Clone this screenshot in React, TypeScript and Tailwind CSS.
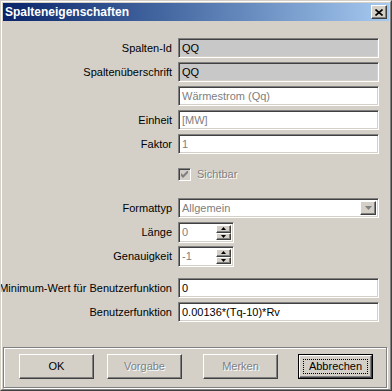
import React from 'react';

const sunken =
  'border border-t-[#808080] border-l-[#808080] border-b-white border-r-white shadow-[inset_1px_1px_0_#404040,inset_-1px_-1px_0_#d4d0c8]';
const raised =
  'border border-t-white border-l-white border-b-[#404040] border-r-[#404040] shadow-[inset_-1px_-1px_0_#808080,inset_1px_1px_0_#d4d0c8]';
const disabledText = 'text-[#808080] [text-shadow:1px_1px_0_#ffffff]';

const Row: React.FC<{ label?: string; className?: string; children: React.ReactNode }> = ({ label, className = '', children }) => (
  <div className={`flex items-center ${className}`}>
    <div className="w-[175px] shrink-0 flex justify-end pr-[6px] whitespace-nowrap">
      {label && <span>{label}</span>}
    </div>
    {children}
  </div>
);

const Field: React.FC<{ value: string; tone?: 'gray' | 'white'; dim?: boolean }> = ({ value, tone = 'white', dim }) => (
  <div
    className={`w-[201px] h-[20px] flex items-center pl-[3px] whitespace-nowrap ${sunken} ${
      tone === 'gray' ? 'bg-[#c8c8c8]' : 'bg-white'
    } ${dim ? 'text-[#808080]' : 'text-black'}`}
  >
    {value}
  </div>
);

const Spinner: React.FC<{ value: string }> = ({ value }) => (
  <div className={`w-[56px] h-[21px] flex bg-white ${sunken} p-[2px]`}>
    <div className="flex-1 flex items-center pl-[1px] text-[#808080]">{value}</div>
    <div className="w-[15px] flex flex-col">
      <div className={`flex-1 bg-[#d4d0c8] flex items-center justify-center ${raised}`}>
        <svg width="5" height="3" viewBox="0 0 5 3"><path d="M2.5 0L5 3H0z" fill="#000" /></svg>
      </div>
      <div className={`flex-1 bg-[#d4d0c8] flex items-center justify-center ${raised}`}>
        <svg width="5" height="3" viewBox="0 0 5 3"><path d="M0 0h5L2.5 3z" fill="#000" /></svg>
      </div>
    </div>
  </div>
);

const Btn: React.FC<{ label: string; className?: string; disabled?: boolean; isDefault?: boolean }> = ({ label, className = '', disabled, isDefault }) =>
  isDefault ? (
    <div className={`w-[75px] h-[25px] border border-black ${className}`}>
      <div className={`w-full h-full bg-[#d4d0c8] flex items-center justify-center ${raised} p-[3px]`}>
        <div className="w-full h-full border border-dotted border-black flex items-center justify-center">{label}</div>
      </div>
    </div>
  ) : (
    <div className={`w-[75px] h-[25px] bg-[#d4d0c8] flex items-center justify-center ${raised} ${disabled ? disabledText : 'text-black'} ${className}`}>
      {label}
    </div>
  );

export default function App() {
  return (
    <div
      className="w-[392px] h-[391px] overflow-hidden bg-[#d4d0c8] border border-t-[#d4d0c8] border-l-[#d4d0c8] border-r-[#404040] border-b-[#404040] text-[11px] text-black"
      style={{ fontFamily: '"Liberation Sans", Arial, sans-serif' }}
    >
      <div className="h-full flex flex-col border border-t-white border-l-white border-r-[#808080] border-b-[#808080] px-[1px] pt-[1px]">
        {/* title bar */}
        <div className="h-[18px] shrink-0 flex items-center justify-between bg-gradient-to-r from-[#0a246a] to-[#a6caf0] pl-[2px] pr-[2px]">
          <span className="text-white font-bold text-[12px] leading-none">Spalteneigenschaften</span>
          <div className={`w-[16px] h-[14px] bg-[#d4d0c8] flex items-center justify-center ${raised}`}>
            <svg width="8" height="7" viewBox="0 0 8 7">
              <path d="M0.5 0.5L7.5 6.5M7.5 0.5L0.5 6.5" stroke="#000" strokeWidth="1.6" />
            </svg>
          </div>
        </div>

        <div className="flex flex-col pt-[17px]">
          <Row label="Spalten-Id">
            <Field value="QQ" tone="gray" />
          </Row>
          <Row label="Spaltenüberschrift" className="mt-[4px]">
            <Field value="QQ" tone="gray" />
          </Row>
          <Row className="mt-[4px]">
            <Field value="Wärmestrom (Qq)" dim />
          </Row>
          <Row label="Einheit" className="mt-[4px]">
            <Field value="[MW]" dim />
          </Row>
          <Row label="Faktor" className="mt-[4px]">
            <Field value="1" dim />
          </Row>
          <Row className="mt-[14px] h-[13px]">
            <div className={`w-[13px] h-[13px] bg-[#d4d0c8] flex items-center justify-center ${sunken}`}>
              <svg width="7" height="7" viewBox="0 0 7 7">
                <path d="M0 2v3l2 2l5-5V-1L2 4z" fill="#808080" />
              </svg>
            </div>
            <span className={`ml-[6px] ${disabledText}`}>Sichtbar</span>
          </Row>
          <Row label="Formattyp" className="mt-[17px]">
            <div className={`w-[201px] h-[20px] flex bg-white ${sunken} p-[2px]`}>
              <div className="flex-1 flex items-center pl-[1px] text-[#808080]">Allgemein</div>
              <div className={`w-[16px] bg-[#d4d0c8] flex items-center justify-center ${raised}`}>
                <svg width="7" height="4" viewBox="0 0 7 4"><path d="M0 0h7L3.5 4z" fill="#808080" /></svg>
              </div>
            </div>
          </Row>
          <Row label="Länge" className="mt-[4px]">
            <Spinner value="0" />
          </Row>
          <Row label="Genauigkeit" className="mt-[3px]">
            <Spinner value="-1" />
          </Row>
          <Row label="Minimum-Wert für Benutzerfunktion" className="mt-[11px]">
            <Field value="0" />
          </Row>
          <Row label="Benutzerfunktion" className="mt-[4px]">
            <Field value="0.00136*(Tq-10)*Rv" />
          </Row>

          <div className="mt-[25px] w-[384px] h-[41px] border border-[#808080] shadow-[inset_1px_1px_0_#ffffff,1px_1px_0_#ffffff] flex items-start pt-[6px]">
            <Btn label="OK" className="ml-[15px]" />
            <Btn label="Vorgabe" className="ml-[13px]" disabled />
            <Btn label="Merken" className="ml-[21px]" disabled />
            <Btn label="Abbrechen" className="ml-[20px]" isDefault />
          </div>
        </div>
      </div>
    </div>
  );
}
